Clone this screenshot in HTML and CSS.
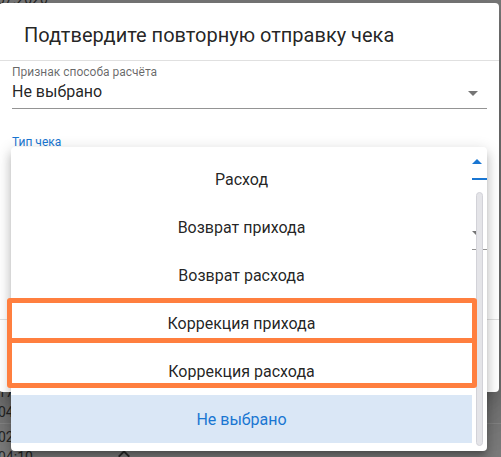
FILE: index.html
```html
<!DOCTYPE html>
<html lang="ru">
<head>
<meta charset="utf-8">
<title>Повторная отправка чека</title>
<link rel="stylesheet" href="styles.css">
</head>
<body>
<div class="page">
  <div class="bg-top">07.2020</div>
  <div class="bg-cells">
    <div class="bg-cell">
      <div class="bg-col">
        <div class="bg-line">17.07.2020</div>
        <div class="bg-line">04:31</div>
      </div>
    </div>
    <div class="bg-cell">
      <div class="bg-col">
        <div class="bg-line">02.07.2020</div>
        <div class="bg-line">04:10</div>
      </div>
      <svg class="bg-chev" width="24" height="24" viewBox="0 0 24 24"><path d="M7.41,15.41L12,10.83L16.59,15.41L18,14L12,8L6,14L7.41,15.41Z"/></svg>
    </div>
  </div>
</div>

<div class="dialog">
  <div class="dlg-title">Подтвердите повторную отправку чека</div>
  <div class="dlg-body">
    <div class="field">
      <div class="f-label">Признак способа расчёта</div>
      <div class="f-input">
        <span class="f-value">Не выбрано</span>
        <svg class="f-caret" width="24" height="24" viewBox="0 0 24 24"><path d="M7,10L12,15L17,10H7Z"/></svg>
      </div>
    </div>
    <div class="field field-active">
      <div class="f-label f-label-active">Тип чека</div>
    </div>
  </div>
  <div class="dlg-actions"></div>
</div>

<div class="menu">
  <ul class="menu-list">
    <li class="menu-item">Расход</li>
    <li class="menu-item">Возврат прихода</li>
    <li class="menu-item">Возврат расхода</li>
    <li class="menu-item">Коррекция прихода</li>
    <li class="menu-item">Коррекция расхода</li>
    <li class="menu-item menu-item-selected">Не выбрано</li>
  </ul>
  <div class="menu-side">
    <svg class="side-caret side-caret-up" width="10" height="5" viewBox="0 0 10 5"><path d="M0,5L5,0L10,5Z"/></svg>
    <div class="side-line side-line-active"></div>
    <svg class="side-caret side-caret-down" width="10" height="5" viewBox="0 0 10 5"><path d="M0,0L5,5L10,0Z"/></svg>
    <div class="side-line"></div>
    <div class="scroll-thumb"></div>
  </div>
  <div class="mark mark-1"></div>
  <div class="mark mark-2"></div>
</div>
</body>
</html>
```

FILE: styles.css
```css
* {
  box-sizing: border-box;
  margin: 0;
  padding: 0;
}

html, body {
  width: 501px;
  height: 457px;
  overflow: hidden;
}

body {
  position: relative;
  background: #7a7a7a;
  font-family: Roboto, "Noto Sans", "Liberation Sans", sans-serif;
}

/* dimmed page behind the modal */
.page {
  height: 100%;
  display: flex;
  flex-direction: column;
  color: #262626;
  font-size: 14px;
  line-height: 20px;
}

.bg-top {
  margin-top: -11px;
  margin-left: -3px;
}

.bg-cells {
  margin-top: auto;
  margin-bottom: -12px;
}

.bg-cell {
  display: flex;
  padding: 3px 0 1px;
  border-bottom: 1px solid #888888;
}

.bg-col {
  width: 114px;
  margin-left: -2px;
}

.bg-chev {
  margin-top: 15px;
  fill: #2a2a2a;
}

/* dialog */
.dialog {
  position: absolute;
  left: -1px;
  top: 3px;
  width: 500px;
  height: 389px;
  background: #ffffff;
  border-radius: 4px;
  display: flex;
  flex-direction: column;
  box-shadow: 0 11px 15px -7px rgba(0,0,0,.2), 0 24px 38px 3px rgba(0,0,0,.14), 0 9px 46px 8px rgba(0,0,0,.12);
}

.dlg-title {
  padding: 16px 24px 9px 25px;
  font-size: 20px;
  line-height: 32px;
  color: rgba(0,0,0,.87);
  border-bottom: 1px solid #e0e0e0;
}

.dlg-body {
  flex: 1;
  padding: 3px 12px 0 13px;
}

.f-label {
  font-size: 12px;
  line-height: 16px;
  color: rgba(0,0,0,.6);
}

.f-label-active {
  color: #1976d2;
}

.f-input {
  display: flex;
  align-items: center;
  justify-content: space-between;
  height: 29px;
  padding-bottom: 4px;
  border-bottom: 1px solid rgba(0,0,0,.42);
}

.f-value {
  font-size: 16px;
  line-height: 24px;
  color: rgba(0,0,0,.87);
}

.f-caret {
  margin-right: 2px;
  margin-top: 1px;
  fill: rgba(0,0,0,.54);
}

.field-active {
  margin-top: 25px;
}

.dlg-actions {
  height: 73px;
  border-top: 1px solid #e0e0e0;
}

/* dropdown menu */
.menu {
  position: absolute;
  left: 11px;
  top: 147px;
  width: 476px;
  height: 304px;
  background: #ffffff;
  border-radius: 4px;
  display: flex;
  box-shadow: 0 5px 5px -3px rgba(0,0,0,.2), 0 8px 10px 1px rgba(0,0,0,.14), 0 3px 14px 2px rgba(0,0,0,.12);
}

.menu-list {
  flex: 1;
  list-style: none;
  padding: 8px 0;
  overflow: hidden;
}

.menu-item {
  height: 48px;
  display: flex;
  align-items: center;
  justify-content: center;
  font-size: 16px;
  color: rgba(0,0,0,.87);
}

.menu-item-selected {
  background: #dae7f6;
  color: #1976d2;
}

.menu-side {
  position: relative;
  width: 15px;
  display: flex;
  flex-direction: column;
}

.side-caret {
  display: block;
  margin-left: 0;
}

.side-caret-up {
  margin-top: 12px;
  fill: #1976d2;
}

.side-caret-down {
  margin-top: 51px;
  fill: rgba(0,0,0,.54);
}

.side-line {
  height: 1px;
  margin-top: 13px;
  background: rgba(0,0,0,.42);
}

.side-line-active {
  height: 2px;
  margin-top: 14px;
  background: #1976d2;
}

.scroll-thumb {
  position: absolute;
  left: 4px;
  top: 45px;
  width: 7px;
  height: 254px;
  border-radius: 4px;
  background: #e4e4e8;
  border: 1px solid #d2d2d8;
}

/* highlight annotations */
.mark {
  position: absolute;
  left: -4px;
  width: 470px;
  border: 5px solid #ff7f3f;
  border-radius: 3px;
}

.mark-1 {
  top: 151px;
  height: 45px;
}

.mark-2 {
  top: 191px;
  height: 50px;
}
```
